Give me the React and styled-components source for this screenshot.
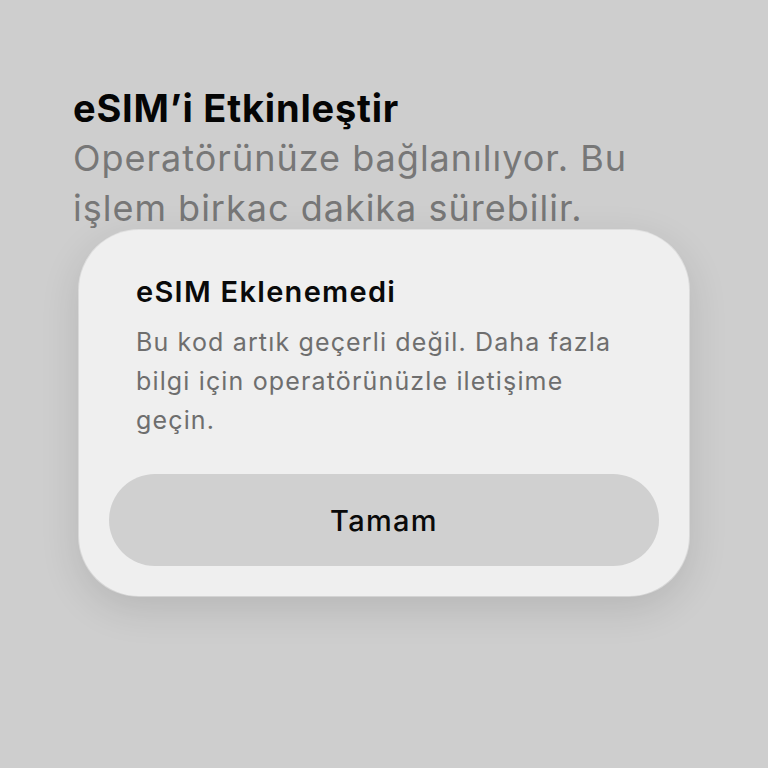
import React from "react";
import styled, { createGlobalStyle } from "styled-components";

const Global = createGlobalStyle`
  html, body { margin: 0; padding: 0; }
  body {
    background: #cecece;
    font-family: Inter, "Noto Sans", "Liberation Sans", sans-serif;
    -webkit-font-smoothing: antialiased;
  }
`;

const App = () => {
  return (
    <Screen>
      <Global />
      <Header>
        <Title>eSIM’i Etkinleştir</Title>
        <Subtitle>Operatörünüze bağlanılıyor. Bu işlem birkac dakika sürebilir.</Subtitle>
      </Header>

      <Alert role="alertdialog">
        <AlertBody>
          <AlertTitle>eSIM Eklenemedi</AlertTitle>
          <AlertText>
            Bu kod artık geçerli değil. Daha fazla bilgi için operatörünüzle iletişime geçin.
          </AlertText>
        </AlertBody>
        <AlertButton>Tamam</AlertButton>
      </Alert>
    </Screen>
  );
};

const Screen = styled.div`
  position: relative;
  width: 768px;
  height: 768px;
  overflow: hidden;
  background: #cecece;
`;

const Header = styled.div`
  padding: 83px 0 0 73px;
  width: 600px;
`;

const Title = styled.h1`
  margin: 0;
  font-size: 38px;
  line-height: 50px;
  font-weight: 700;
  letter-spacing: 0.8px;
  color: #050505;
`;

const Subtitle = styled.p`
  margin: 0;
  font-size: 36px;
  line-height: 50px;
  font-weight: 400;
  letter-spacing: 1px;
  color: #777777;
`;

// dialog floats over the page content
const Alert = styled.div`
  position: absolute;
  left: 79px;
  top: 230px;
  width: 610px;
  height: 366px;
  box-sizing: border-box;
  padding: 0 30px 30px;
  border-radius: 60px;
  background: #efefef;
  box-shadow: 0 12px 40px rgba(0, 0, 0, 0.12), 0 0 0 1px rgba(255, 255, 255, 0.5);
  display: flex;
  flex-direction: column;
`;

const AlertBody = styled.div`
  flex: 1;
  padding: 44px 27px 0;
`;

const AlertTitle = styled.h2`
  margin: 0 0 13px;
  font-size: 29px;
  line-height: 36px;
  font-weight: 600;
  letter-spacing: 1.3px;
  color: #0a0a0a;
`;

const AlertText = styled.p`
  margin: 0;
  max-width: 495px;
  font-size: 25px;
  line-height: 39px;
  font-weight: 400;
  letter-spacing: 1.15px;
  color: #6e6e6e;
`;

const AlertButton = styled.button`
  height: 92px;
  width: 100%;
  border: none;
  border-radius: 46px;
  background: #d0d0d0;
  color: #0a0a0a;
  font-family: inherit;
  font-size: 29px;
  font-weight: 500;
  letter-spacing: 1.3px;
  cursor: pointer;
`;

export default App;
